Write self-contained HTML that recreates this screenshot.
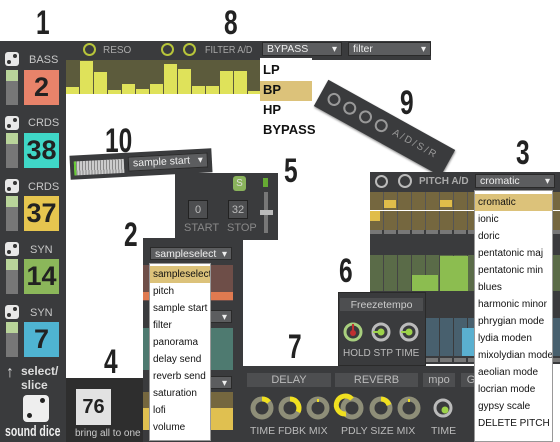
<!DOCTYPE html>
<html><head><meta charset="utf-8"><style>
*{margin:0;padding:0;box-sizing:border-box}
body{width:560px;height:442px;overflow:hidden;background:#fff;position:relative;font-family:"Liberation Sans",sans-serif}
.a{position:absolute}
.num{position:absolute;font-family:"Liberation Sans Narrow","Liberation Sans",sans-serif;font-size:34px;font-weight:bold;color:#222;transform:scaleX(.72);transform-origin:left top;line-height:1}
.dark{background:#3a3b3d}
.lbl{position:absolute;color:#c8c8c8;font-size:11px;white-space:nowrap}
.box{position:absolute;width:35px;height:35px;font-family:"Liberation Sans Narrow","Liberation Sans",sans-serif;font-size:27px;color:#222;text-align:center;line-height:35px;font-weight:bold}
.sl{position:absolute;width:12px;height:35px;background:#777}
.sl i{display:block;height:11px;background:#b9d49a}
.dice{position:absolute;width:14px;height:14px;background:#e8e8e8;border-radius:3px}
.dice:before,.dice:after{content:"";position:absolute;width:4px;height:4px;border-radius:50%;background:#333}
.dice:before{left:2px;bottom:2px}.dice:after{right:2px;top:2px}
.dd{position:absolute;background:#5c5d5f;border:1px solid #2a2a2a;color:#eee;font-size:10.5px;padding-left:4px;line-height:13px;white-space:nowrap;overflow:hidden}
.dd:after{content:"▾";position:absolute;right:4px;top:0;font-size:10px}
.menu{position:absolute;background:#fff;border:1px solid #999;font-size:10px;color:#111;white-space:nowrap;overflow:hidden}
.menu div{height:17px;line-height:17px;padding-left:3px}
.hl{background:#dcc27a}
.btn{position:absolute;background:#4d4e50;color:#bbb;font-size:11px;text-align:center;line-height:14px;white-space:nowrap;overflow:hidden}
</style></head><body>

<div class="num" style="left:36px;top:6px">1</div>
<div class="num" style="left:224px;top:6px">8</div>
<div class="num" style="left:105px;top:124px">10</div>
<div class="num" style="left:400px;top:86px">9</div>
<div class="num" style="left:284px;top:154px">5</div>
<div class="num" style="left:516px;top:136px">3</div>
<div class="num" style="left:124px;top:218px">2</div>
<div class="num" style="left:104px;top:345px">4</div>
<div class="num" style="left:339px;top:254px">6</div>
<div class="num" style="left:288px;top:330px">7</div>

<!-- sidebar -->
<div class="a dark" style="left:0;top:41px;width:66px;height:401px"></div>
<div class="dice" style="left:5px;top:52px"></div><div class="lbl" style="left:29px;top:54px">BASS</div>
<div class="sl" style="left:6px;top:70px"><i></i></div><div class="box" style="left:24px;top:70px;background:#e8836a">2</div>
<div class="dice" style="left:5px;top:116px"></div><div class="lbl" style="left:28px;top:117px">CRDS</div>
<div class="sl" style="left:6px;top:133px"><i></i></div><div class="box" style="left:24px;top:133px;background:#3fd7c7">38</div>
<div class="dice" style="left:5px;top:179px"></div><div class="lbl" style="left:28px;top:181px">CRDS</div>
<div class="sl" style="left:6px;top:196px"><i></i></div><div class="box" style="left:24px;top:196px;background:#e6c54f">37</div>
<div class="dice" style="left:5px;top:242px"></div><div class="lbl" style="left:30px;top:244px">SYN</div>
<div class="sl" style="left:6px;top:259px"><i></i></div><div class="box" style="left:24px;top:259px;background:#8bb75a">14</div>
<div class="dice" style="left:5px;top:305px"></div><div class="lbl" style="left:30px;top:307px">SYN</div>
<div class="sl" style="left:6px;top:322px"><i></i></div><div class="box" style="left:24px;top:322px;background:#4fb4d2">7</div>
<div class="a" style="left:6px;top:364px;color:#ddd;font-size:16px">↑</div>
<div class="a" style="left:21px;top:364px;color:#ddd;font-size:12px;font-weight:bold;line-height:14px">select/<br>slice</div>
<div class="a" style="left:23px;top:395px;width:26px;height:27px;background:#eee;border-radius:4px"></div>
<div class="a" style="left:27px;top:413px;width:5px;height:5px;border-radius:50%;background:#222"></div>
<div class="a" style="left:40px;top:398px;width:5px;height:5px;border-radius:50%;background:#222"></div>
<div class="a" style="left:5px;top:423px;color:#eee;font-size:15px;font-weight:bold;white-space:nowrap;transform:scaleX(.7);transform-origin:left">sound dice</div>

<!-- filter top -->
<div class="a dark" style="left:66px;top:41px;width:365px;height:19px"></div>
<div class="a" style="left:83px;top:43px;width:13px;height:13px;border:2px solid #b7c43a;border-radius:50%"></div>
<div class="lbl" style="left:103px;top:45px;color:#aaa;font-size:10px">RESO</div>
<div class="a" style="left:161px;top:43px;width:13px;height:13px;border:2px solid #b7c43a;border-radius:50%"></div>
<div class="a" style="left:183px;top:43px;width:13px;height:13px;border:2px solid #b7c43a;border-radius:50%"></div>
<div class="lbl" style="left:205px;top:45px;color:#aaa;font-size:10px;transform:scaleX(.9);transform-origin:left">FILTER A/D</div>
<div class="dd" style="left:262px;top:42px;width:80px;height:14px">BYPASS</div>
<div class="dd" style="left:348px;top:42px;width:83px;height:14px">filter</div>
<div class="a" style="left:66px;top:60px;width:194px;height:34px;background:#5c5b3c"></div>
<svg class="a" style="left:66px;top:60px" width="194" height="34">
<g fill="#dfe25a">
<rect x="0" y="27" width="13" height="7"/><rect x="14" y="1" width="13" height="33"/><rect x="28" y="12" width="13" height="22"/><rect x="42" y="30" width="13" height="4"/><rect x="56" y="24" width="13" height="10"/><rect x="70" y="29" width="13" height="5"/><rect x="84" y="24" width="13" height="10"/><rect x="98" y="4" width="13" height="30"/><rect x="112" y="9" width="13" height="25"/><rect x="126" y="26" width="13" height="8"/><rect x="140" y="26" width="13" height="8"/><rect x="154" y="11" width="13" height="23"/><rect x="168" y="11" width="13" height="23"/><rect x="182" y="31" width="12" height="3"/></g></svg>
<div class="menu" style="left:260px;top:58px;width:52px;height:86px;border:none;font-size:13px;font-weight:bold;padding-top:3px;overflow:visible">
<div style="height:20px">LP</div><div class="hl" style="height:20px">BP</div><div style="height:20px">HP</div><div style="height:20px">BYPASS</div></div>

<!-- 9 rotated -->
<div class="a" style="left:312px;top:113px;width:145px;height:30px;background:#3a3b3d;transform:rotate(29deg);box-shadow:1px 1px 2px #888">
<div class="a" style="left:8px;top:8px;width:13px;height:13px;border:2px solid #999;border-radius:50%"></div>
<div class="a" style="left:26px;top:8px;width:13px;height:13px;border:2px solid #999;border-radius:50%"></div>
<div class="a" style="left:44px;top:8px;width:13px;height:13px;border:2px solid #999;border-radius:50%"></div>
<div class="a" style="left:62px;top:8px;width:13px;height:13px;border:2px solid #999;border-radius:50%"></div>
<div class="lbl" style="left:82px;top:9px;color:#999;font-size:10px;letter-spacing:2px">A/D/S/R</div></div>

<!-- 10 -->
<div class="a" style="left:70px;top:152px;width:142px;height:24px;background:#3a3b3d;transform:rotate(-3deg)">
<div class="a" style="left:4px;top:6px;width:50px;height:14px;background:repeating-linear-gradient(90deg,#ccc 0 2px,#888 2px 3px)"></div>
<div class="a" style="left:4px;top:6px;width:2px;height:14px;background:#6c3"></div>
<div class="dd" style="left:58px;top:4px;width:80px;height:15px">sample start</div></div>

<!-- 5 -->
<div class="a dark" style="left:175px;top:173px;width:103px;height:67px"></div>
<div class="a" style="left:233px;top:176px;width:13px;height:15px;background:#8ab35c;border-radius:3px;color:#ddd;font-size:10px;text-align:center;line-height:15px">S</div>
<div class="a" style="left:263px;top:178px;width:5px;height:9px;background:#6a3"></div>
<div class="btn" style="left:188px;top:200px;width:20px;height:19px;line-height:19px;border:1px solid #222">0</div>
<div class="btn" style="left:228px;top:200px;width:20px;height:19px;line-height:19px;border:1px solid #222">32</div>
<div class="lbl" style="left:184px;top:222px;color:#888;font-size:11px">START</div>
<div class="lbl" style="left:227px;top:222px;color:#888;font-size:11px">STOP</div>
<div class="a" style="left:264px;top:192px;width:4px;height:41px;background:#777"></div>
<div class="a" style="left:260px;top:210px;width:13px;height:5px;background:#bbb"></div>

<!-- 4 / texture -->
<div class="a" style="left:66px;top:378px;width:80px;height:64px;background:#2e2e2e"></div>
<div class="a" style="left:76px;top:389px;width:35px;height:36px;background:#e2e2e2;font-size:20px;font-weight:bold;text-align:center;line-height:36px;color:#222">76</div>
<div class="a" style="left:75px;top:428px;color:#ccc;font-size:10px;white-space:nowrap">bring all to one</div>

<!-- 2 sequencer -->
<div class="a dark" style="left:143px;top:238px;width:100px;height:204px"></div>
<div class="dd" style="left:150px;top:247px;width:82px;height:13px">sampleselect</div>
<div class="a" style="left:143px;top:265px;width:90px;height:36px;background:#6e4e48"></div>
<div class="a" style="left:143px;top:292px;width:90px;height:8px;background:#e07a50"></div>
<div class="dd" style="left:210px;top:310px;width:22px;height:13px"></div>
<div class="a" style="left:143px;top:328px;width:90px;height:42px;background:#4e7a70"></div>
<div class="dd" style="left:210px;top:376px;width:22px;height:13px"></div>
<div class="a" style="left:143px;top:392px;width:90px;height:38px;background:#75673f"></div>
<div class="a" style="left:143px;top:408px;width:90px;height:22px;background:#e0c050"></div>
<div class="menu" style="left:149px;top:263px;width:62px;height:178px;padding-top:2px">
<div class="hl">sampleselect</div><div>pitch</div><div>sample start</div><div>filter</div><div>panorama</div><div>delay send</div><div>reverb send</div><div>saturation</div><div>lofi</div><div>volume</div></div>

<!-- 3 pitch -->
<div class="a dark" style="left:370px;top:172px;width:190px;height:192px"></div>
<div class="a" style="left:375px;top:175px;width:13px;height:13px;border:2px solid #bbb;border-radius:50%"></div>
<div class="a" style="left:398px;top:174px;width:14px;height:14px;border:2px solid #bbb;border-radius:50%"></div>
<div class="lbl" style="left:419px;top:176px;color:#aaa;font-weight:bold;font-size:10px">PITCH A/D</div>
<div class="dd" style="left:475px;top:174px;width:80px;height:14px">cromatic</div>
<div class="a" style="left:370px;top:192px;width:190px;height:38px;background:repeating-linear-gradient(90deg,#75673f 0 13px,#555 13px 14px)"></div>
<div class="a" style="left:384px;top:200px;width:12px;height:8px;background:#e0bd4a"></div>
<div class="a" style="left:440px;top:200px;width:12px;height:7px;background:#e0bd4a"></div>
<div class="a" style="left:370px;top:210px;width:190px;height:1px;background:#fff"></div>
<div class="a" style="left:370px;top:211px;width:10px;height:10px;background:#e0bd4a"></div>
<div class="a" style="left:370px;top:230px;width:190px;height:4px;background:repeating-linear-gradient(90deg,#777 0 12px,#3a3b3d 12px 14px)"></div>
<div class="a" style="left:370px;top:255px;width:190px;height:36px;background:repeating-linear-gradient(90deg,#5a6b48 0 13px,#444 13px 14px)"></div>
<div class="a" style="left:412px;top:275px;width:26px;height:16px;background:#8cbd50"></div>
<div class="a" style="left:440px;top:256px;width:28px;height:35px;background:#8cbd50"></div>
<div class="a" style="left:370px;top:318px;width:190px;height:38px;background:repeating-linear-gradient(90deg,#48606e 0 13px,#3a3b3d 13px 14px)"></div>
<div class="a" style="left:462px;top:328px;width:12px;height:28px;background:#5ab0d0"></div>
<div class="a" style="left:370px;top:358px;width:190px;height:4px;background:repeating-linear-gradient(90deg,#777 0 12px,#3a3b3d 12px 14px)"></div>

<!-- bottom fx -->
<div class="a dark" style="left:240px;top:366px;width:240px;height:76px"></div>
<div class="btn" style="left:247px;top:373px;width:84px;height:14px">DELAY</div>
<div class="btn" style="left:335px;top:373px;width:83px;height:14px">REVERB</div>
<div class="btn" style="left:423px;top:373px;width:32px;height:14px">mpo</div>
<div class="btn" style="left:461px;top:373px;width:20px;height:14px">G</div>
<svg class="a" style="left:240px;top:390px" width="240" height="32">
<g fill="none" stroke-width="5">
<circle cx="22" cy="18" r="9" stroke="#8e8e78"/><path d="M22 9 A9 9 0 0 1 29 12" stroke="#f0e020"/>
<circle cx="50" cy="18" r="9" stroke="#8e8e78"/><path d="M50 9 A9 9 0 0 1 58 22" stroke="#f0e020"/>
<circle cx="78" cy="18" r="9" stroke="#8e8e78"/><path d="M78 9 L78 12" stroke="#f0e020" stroke-width="2"/>
<circle cx="112" cy="18" r="9" stroke="#8e8e78"/><path d="M112 9 A9 9 0 1 0 106 24" stroke="#f0e020"/>
<circle cx="141" cy="18" r="9" stroke="#8e8e78"/><path d="M141 9 A9 9 0 0 1 149 15" stroke="#f0e020"/>
<circle cx="169" cy="18" r="9" stroke="#8e8e78"/><path d="M169 9 L169 12" stroke="#f0e020" stroke-width="2"/>
<circle cx="203" cy="18" r="8" stroke="#bbb" stroke-width="3"/></g>
<circle cx="205" cy="20" r="3.5" fill="#9dd24a"/></svg>
<div class="lbl" style="left:250px;top:425px;color:#bbb;font-size:10.5px">TIME FDBK MIX</div>
<div class="lbl" style="left:341px;top:425px;color:#bbb;font-size:10.5px">PDLY SIZE MIX</div>
<div class="lbl" style="left:431px;top:425px;color:#bbb;font-size:10.5px">TIME</div>

<div class="menu" style="left:474px;top:190px;width:79px;height:252px;padding-top:3px">
<div class="hl">cromatic</div><div>ionic</div><div>doric</div><div>pentatonic maj</div><div>pentatonic min</div><div>blues</div><div>harmonic minor</div><div>phrygian mode</div><div>lydia moden</div><div>mixolydian mode</div><div>aeolian mode</div><div>locrian mode</div><div>gypsy scale</div><div>DELETE PITCH</div></div>

<!-- 6 -->
<div class="a dark" style="left:338px;top:292px;width:88px;height:74px;border:1px solid #2a2a2a"></div>
<div class="btn" style="left:340px;top:298px;width:83px;height:13px;color:#ccc;font-size:10.5px">Freezetempo</div>
<svg class="a" style="left:340px;top:320px" width="85" height="26">
<circle cx="13" cy="12" r="8" fill="none" stroke="#a8cf7e" stroke-width="3"/><circle cx="13" cy="13" r="3" fill="#c03030"/><path d="M13 4V12" stroke="#c03030" stroke-width="2"/>
<circle cx="41" cy="12" r="8" fill="none" stroke="#bbb" stroke-width="3"/><circle cx="41" cy="12" r="3.5" fill="#9dd24a"/><path d="M33 12H41" stroke="#9dd24a" stroke-width="2"/>
<circle cx="69" cy="12" r="8" fill="none" stroke="#bbb" stroke-width="3"/><circle cx="69" cy="12" r="3.5" fill="#9dd24a"/><path d="M61 12H69" stroke="#9dd24a" stroke-width="2"/></svg>
<div class="lbl" style="left:343px;top:348px;color:#bbb;font-size:10px">HOLD STP TIME</div>
</body></html>
